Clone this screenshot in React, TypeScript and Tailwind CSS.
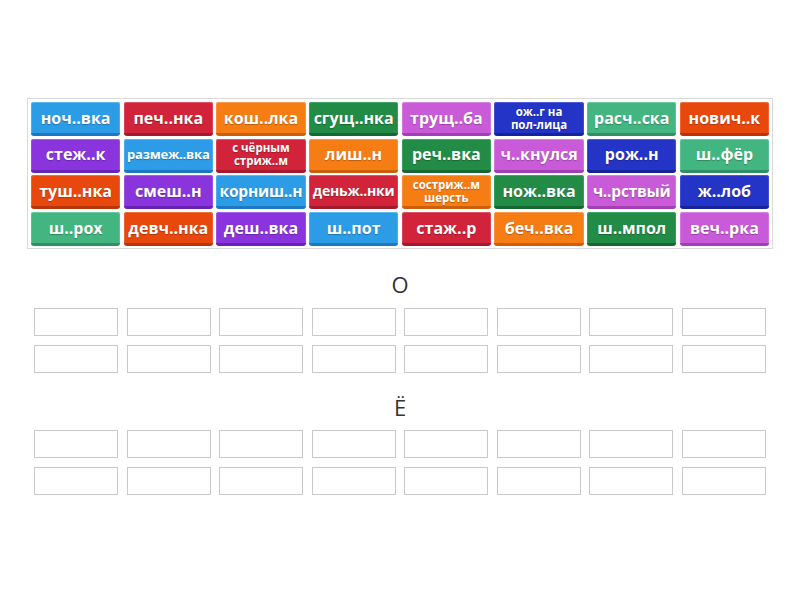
import React from "react";

type Tile = { t: string; c: string; s?: string };

const C: Record<string, string> = {
  blue: "bg-[#2d9ce6] border-b-[#1b78c2] shadow-[inset_0_1px_0_#5cb6ef,inset_1px_0_0_#4aacec,inset_-1px_0_0_#4aacec]",
  red: "bg-[#d1233a] border-b-[#a5192c] shadow-[inset_0_1px_0_#e05266,inset_1px_0_0_#dc4257,inset_-1px_0_0_#dc4257]",
  orange: "bg-[#f67c14] border-b-[#cc5f08] shadow-[inset_0_1px_0_#f99a48,inset_1px_0_0_#f88f34,inset_-1px_0_0_#f88f34]",
  dgreen: "bg-[#228b46] border-b-[#176733] shadow-[inset_0_1px_0_#3ea764,inset_1px_0_0_#35a05b,inset_-1px_0_0_#35a05b]",
  magenta: "bg-[#c95ad8] border-b-[#a33fb4] shadow-[inset_0_1px_0_#d883e4,inset_1px_0_0_#d476e0,inset_-1px_0_0_#d476e0]",
  dblue: "bg-[#2334c6] border-b-[#17239a] shadow-[inset_0_1px_0_#4b5ad6,inset_1px_0_0_#3e4dd1,inset_-1px_0_0_#3e4dd1]",
  teal: "bg-[#42b581] border-b-[#2e9064] shadow-[inset_0_1px_0_#6ac89c,inset_1px_0_0_#5cc293,inset_-1px_0_0_#5cc293]",
  ored: "bg-[#e8480c] border-b-[#b83505] shadow-[inset_0_1px_0_#ef6f40,inset_1px_0_0_#ed6130,inset_-1px_0_0_#ed6130]",
  violet: "bg-[#8a34de] border-b-[#6922b6] shadow-[inset_0_1px_0_#a45ee6,inset_1px_0_0_#9c50e3,inset_-1px_0_0_#9c50e3]",
};

const tiles: Tile[] = [
  { t: "ноч..вка", c: "blue" },
  { t: "печ..нка", c: "red" },
  { t: "кош..лка", c: "orange" },
  { t: "сгущ..нка", c: "dgreen" },
  { t: "трущ..ба", c: "magenta" },
  { t: "ож..г на\nпол-лица", c: "dblue", s: "sm" },
  { t: "расч..ска", c: "teal" },
  { t: "нович..к", c: "ored" },
  { t: "стеж..к", c: "violet" },
  { t: "размеж..вка", c: "blue", s: "md" },
  { t: "с чёрным\nстриж..м", c: "red", s: "sm" },
  { t: "лиш..н", c: "orange" },
  { t: "реч..вка", c: "dgreen" },
  { t: "ч..кнулся", c: "magenta" },
  { t: "рож..н", c: "dblue" },
  { t: "ш..фёр", c: "teal" },
  { t: "туш..нка", c: "ored" },
  { t: "смеш..н", c: "violet" },
  { t: "корниш..н", c: "blue", s: "lg" },
  { t: "деньж..нки", c: "red", s: "md2" },
  { t: "состриж..м\nшерсть", c: "orange", s: "sm" },
  { t: "нож..вка", c: "dgreen" },
  { t: "ч..рствый", c: "magenta", s: "lg" },
  { t: "ж..лоб", c: "dblue" },
  { t: "ш..рох", c: "teal" },
  { t: "девч..нка", c: "ored" },
  { t: "деш..вка", c: "violet" },
  { t: "ш..пот", c: "blue" },
  { t: "стаж..р", c: "red" },
  { t: "беч..вка", c: "orange" },
  { t: "ш..мпол", c: "dgreen" },
  { t: "веч..рка", c: "magenta" },
];

const sizeCls = (s?: string) => {
  if (s === "sm") return "text-[11.5px] leading-[13px]";
  if (s === "md") return "text-[13px] leading-[16px] tracking-[-0.2px]";
  if (s === "md2") return "text-[14px] leading-[16px] tracking-[-0.2px]";
  if (s === "lg") return "text-[15.5px] leading-[18px] tracking-[-0.2px]";
  return "text-[16px] leading-[18px]";
};

function TileView({ tile }: { tile: Tile }) {
  return (
    <div
      className={`h-[34px] rounded-[3px] border-b-[3px] flex items-center justify-center text-center text-white font-bold whitespace-pre-line overflow-hidden [text-shadow:0_1px_1px_rgba(0,0,0,0.25)] ${C[tile.c]} ${sizeCls(tile.s)}`}
    >
      {tile.t}
    </div>
  );
}

function Boxes() {
  return (
    <div className="grid grid-cols-8 gap-x-[8.5px] gap-y-[9px] px-[34px]">
      {Array.from({ length: 16 }).map((_, i) => (
        <div key={i} className="h-[28px] border border-[#c9c9c9] bg-white" />
      ))}
    </div>
  );
}

export default function App() {
  return (
    <div
      className="w-[800px] h-[600px] bg-white overflow-hidden pt-[98px]"
      style={{ fontFamily: '"Open Sans", "Noto Sans", sans-serif' }}
    >
      <div className="mx-[27px] w-[746px] border border-[#d9d9d9] px-[3px] pt-[3px] pb-[2px] grid grid-cols-8 gap-x-[3.5px] gap-y-[2.7px]">
        {tiles.map((t, i) => (
          <TileView key={i} tile={t} />
        ))}
      </div>

      <div className="mt-[20px] h-[30px] flex items-center justify-center text-[22px] text-[#333333]">
        О
      </div>
      <div className="mt-[9px]">
        <Boxes />
      </div>

      <div className="mt-[19px] h-[30px] flex items-center justify-center text-[22px] text-[#333333]">
        Ё
      </div>
      <div className="mt-[8px]">
        <Boxes />
      </div>
    </div>
  );
}
